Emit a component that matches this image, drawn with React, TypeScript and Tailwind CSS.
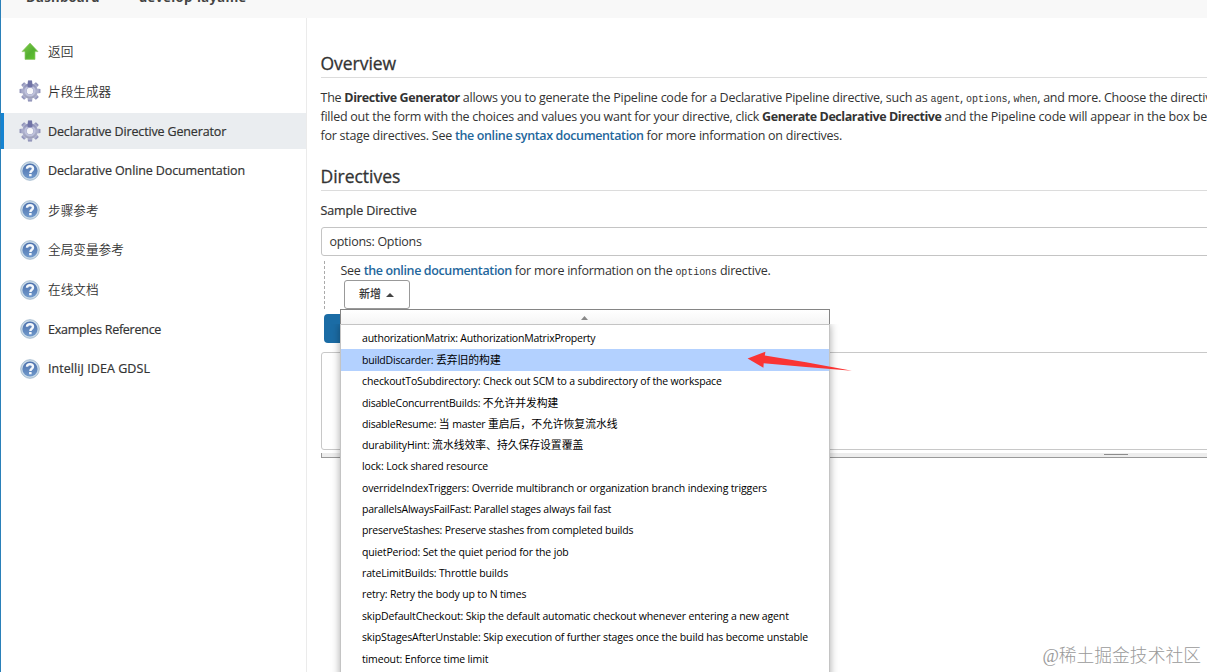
import type { ReactNode } from "react";

const CJK = /([\u3000-\u303f\u4e00-\u9fff\uff00-\uffef]+)/;

function UpArrow() {
  return (
    <svg className="relative -top-px" width="24" height="24" viewBox="0 0 24 24">
      <defs>
        <linearGradient id="up" x1="0" y1="0" x2="1" y2="1">
          <stop offset="0" stopColor="#85cf4b" />
          <stop offset=".55" stopColor="#55b032" />
          <stop offset="1" stopColor="#63c92a" />
        </linearGradient>
      </defs>
      <path d="M12 4 L20 12.6 H17 V20.4 H7 V12.6 H4 Z" fill="url(#up)" stroke="#8fc96a" strokeWidth=".7" strokeLinejoin="round" />
    </svg>
  );
}

function Gear() {
  return (
    <svg width="24" height="24" viewBox="0 0 24 24">
      <defs>
        <linearGradient id="gear" x1="0" y1="0" x2="0" y2="1">
          <stop offset="0" stopColor="#8386b0" />
          <stop offset=".5" stopColor="#b0b3d0" />
          <stop offset="1" stopColor="#9b9eb6" />
        </linearGradient>
      </defs>
      <g fill="url(#gear)">
        {[0, 45, 90, 135, 180, 225, 270, 315].map((a) => (
          <path key={a} d="M9.2 6.5 L10 1.6 H14 L14.8 6.5 Z" transform={`rotate(${a} 12 12)`} />
        ))}
        <path fillRule="evenodd" d="M12 4.4a7.6 7.6 0 1 1 0 15.2a7.6 7.6 0 1 1 0-15.2zM12 8.9a3.1 3.1 0 1 0 0 6.2a3.1 3.1 0 1 0 0-6.2z" />
      </g>
      <circle cx="12" cy="12" r="4.6" fill="none" stroke="#bfc2dc" strokeWidth="2" />
      <circle cx="12" cy="12" r="3" fill="#f7f7fa" />
      <path d="M9.4 8.2 L10.2 1.8 H13.8 L14.6 8.2 Z" fill="#7073a6" />
    </svg>
  );
}

function Help() {
  return (
    <svg width="24" height="24" viewBox="0 0 24 24">
      <defs>
        <linearGradient id="help" x1="0" y1="0" x2="0" y2="1">
          <stop offset="0" stopColor="#4c70ac" />
          <stop offset="1" stopColor="#7099cb" />
        </linearGradient>
      </defs>
      <circle cx="12" cy="12" r="9.3" fill="#c9dae8" stroke="#9fb8cd" strokeWidth=".9" />
      <circle cx="12" cy="12" r="7.6" fill="url(#help)" />
      <path d="M9 9.8c.1-3.5 6-3.4 6 0c0 2-2.6 2-2.6 4.1" fill="none" stroke="#f4f8fc" strokeWidth="2.4" />
      <rect x="11.1" y="15" width="2.5" height="2.3" fill="#f4f8fc" />
    </svg>
  );
}

type Item = { label: string; icon: ReactNode; active?: boolean; cls: string };

const latin = "relative top-px text-[12.5px] [-webkit-text-stroke:0.2px_#333]";
const han = "text-[12.65px] font-[350]";

const nav: Item[] = [
  { label: "返回", icon: <UpArrow />, cls: han },
  { label: "片段生成器", icon: <Gear />, cls: han },
  { label: "Declarative Directive Generator", icon: <Gear />, active: true, cls: `${latin} tracking-[-0.15px]` },
  { label: "Declarative Online Documentation", icon: <Help />, cls: `${latin} tracking-[-0.115px]` },
  { label: "步骤参考", icon: <Help />, cls: han },
  { label: "全局变量参考", icon: <Help />, cls: han },
  { label: "在线文档", icon: <Help />, cls: han },
  { label: "Examples Reference", icon: <Help />, cls: `${latin} tracking-[-0.26px]` },
  { label: "IntelliJ IDEA GDSL", icon: <Help />, cls: `${latin} tracking-[0.06px]` },
];

const options = [
  "authorizationMatrix: AuthorizationMatrixProperty",
  "buildDiscarder: 丢弃旧的构建",
  "checkoutToSubdirectory: Check out SCM to a subdirectory of the workspace",
  "disableConcurrentBuilds: 不允许并发构建",
  "disableResume: 当 master 重启后，不允许恢复流水线",
  "durabilityHint: 流水线效率、持久保存设置覆盖",
  "lock: Lock shared resource",
  "overrideIndexTriggers: Override multibranch or organization branch indexing triggers",
  "parallelsAlwaysFailFast: Parallel stages always fail fast",
  "preserveStashes: Preserve stashes from completed builds",
  "quietPeriod: Set the quiet period for the job",
  "rateLimitBuilds: Throttle builds",
  "retry: Retry the body up to N times",
  "skipDefaultCheckout: Skip the default automatic checkout whenever entering a new agent",
  "skipStagesAfterUnstable: Skip execution of further stages once the build has become unstable",
  "timeout: Enforce time limit",
];

const tight = new Set([0, 1, 3, 4, 8, 9]);

function Mixed({ text }: { text: string }) {
  return (
    <>
      {text.split(CJK).map((part, i) =>
        i % 2 ? (
          <span key={i} className="text-[10.8px] tracking-normal">{part}</span>
        ) : (
          part
        ),
      )}
    </>
  );
}

function Code({ children }: { children: ReactNode }) {
  return <code className="font-['Liberation_Mono',monospace] text-[10px] leading-none tracking-[-0.08px]">{children}</code>;
}

function Strong({ children }: { children: ReactNode }) {
  return <b className="font-bold tracking-[-0.43px]">{children}</b>;
}

function Link({ children }: { children: ReactNode }) {
  return <a className="font-semibold tracking-[-0.37px] text-[#1f679c]">{children}</a>;
}

function Heading({ children }: { children: ReactNode }) {
  return (
    <h2 className="h-[28px] border-b border-[#dcdcdc] text-[17.5px] leading-[27px] tracking-[-0.03px] [-webkit-text-stroke:0.3px_#333]">
      {children}
    </h2>
  );
}

export default function App() {
  return (
    <div className="relative flex h-[672px] w-[1207px] flex-col overflow-hidden border-l border-[#2a80b9] bg-white font-['Open_Sans','Noto_Sans_CJK_SC',sans-serif] text-[#333]">
      <header className="flex h-[18px] shrink-0 items-start bg-[#f8f8f8] pl-[25px] text-[13px] font-bold leading-[18px] text-[#444]">
        <div className="-mt-[12px] flex">
          <span className="w-[113px] tracking-[0.35px]">Dashboard</span>
          <span className="tracking-[0.33px]">develop-layame</span>
        </div>
      </header>

      <div className="flex min-h-0 flex-1">
        <nav className="flex w-[306px] shrink-0 flex-col gap-[3.67px] border-r border-[#ebebeb] pt-[15.6px]">
          {nav.map((n) => (
            <div
              key={n.label}
              className={`-ml-px flex h-9 shrink-0 items-center gap-[6px] border-l-4 pl-[14px] ${n.active ? "border-[#1583d1] bg-[#eaedf0]" : "border-transparent"}`}
            >
              {n.icon}
              <span className={`whitespace-nowrap ${n.cls}`}>{n.label}</span>
            </div>
          ))}
        </nav>

        <main className="min-w-0 flex-1 pl-[13.5px] pt-[32px] text-[12.5px]">
          <Heading>Overview</Heading>
          <div className="mt-[10px] whitespace-nowrap leading-[19px] tracking-[-0.25px]">
            <p className="h-[19px]">
              The <Strong>Directive Generator</Strong> allows you to generate the Pipeline code for a Declarative Pipeline directive, such as <Code>agent</Code>, <Code>options</Code>, <Code>when</Code>, and more. Choose the directive
            </p>
            <p className="h-[19px]">
              filled out the form with the choices and values you want for your directive, click <Strong>Generate Declarative Directive</Strong> <span className="tracking-[-0.2px]">and the Pipeline code will appear in the box below</span>
            </p>
            <p className="h-[19px]">
              for stage directives. See <Link>the online syntax documentation</Link> for more information on directives.
            </p>
          </div>
          <div className="mt-[18px]">
            <Heading>Directives</Heading>
          </div>
          <div className="mt-[10px] leading-[19px] tracking-[-0.1px] [-webkit-text-stroke:0.2px_#333]">Sample Directive</div>
          <div className="mt-[7px] flex h-[29px] w-[1000px] items-center rounded-[3px] border border-[#c4c4c4] pl-[8px] pt-[2px] tracking-[-0.28px]">options: Options</div>

          <div className="ml-[3px] mt-[5px] h-[48px] border-l border-dashed border-[#aaa] pl-[16px]">
            <p className="h-[19px] whitespace-nowrap leading-[19px] tracking-[-0.25px]">
              See <Link>the online documentation</Link> for more information on the <Code>options</Code> directive.
            </p>
            <button className="ml-[3px] flex h-[29px] w-[66px] items-center justify-center gap-[5px] rounded-[3px] border border-[#999] bg-white text-[11px] font-medium text-[#333]">
              新增
              <svg width="8" height="4" viewBox="0 0 8 4"><path d="M0 4 L4 0 L8 4 Z" fill="#444" /></svg>
            </button>
          </div>

          <div className="ml-[3px] mt-[5px] h-[29px] w-[120px] rounded-[4px] bg-[#1b6ca5]" />
          <div className="mt-[9px] h-[98px] w-[1000px] rounded-[3px] border border-[#c8c8c8]" />
          <div className="mt-[3px] flex h-[5px] justify-end border-b border-l border-[#999] bg-[#ededed] pr-[79px]">
            <div className="mt-px h-px w-[24px] bg-[#8c8c8c]" />
          </div>
        </main>
      </div>

      <div className="absolute left-[339px] top-[309px] w-[490px]">
        <div className="flex h-[15px] items-center justify-center border border-b-0 border-[#858585] bg-gradient-to-b from-white to-[#f5f5f5]">
          <svg className="-ml-[2px] mt-[2px]" width="7" height="4" viewBox="0 0 7 4"><path d="M0 4 L3.5 0 L7 4 Z" fill="#888" /></svg>
        </div>
        <ul className="h-[380px] border border-[#c4c4c4] bg-white pt-[3px] text-[10.5px] tracking-[-0.145px] text-black shadow-[0_0_8px_rgba(0,0,0,0.35)] [clip-path:inset(0_-12px_0_-12px)]">
          {options.map((o, i) => (
            <li
              key={o}
              className={`flex h-[21.36px] items-center whitespace-pre pl-[21px] leading-[21px] ${i === 1 ? "bg-[#b3d1ff]" : ""} ${tight.has(i) ? "tracking-[-0.2px]" : ""}`}
            >
              <span><Mixed text={o} /></span>
            </li>
          ))}
        </ul>
      </div>

      <svg className="absolute left-[745px] top-[350px]" width="110" height="24" viewBox="0 0 110 24">
        <path d="M1.6 8.4 L19.4 1.8 L18.8 5.6 L60 12.3 L106 20.7 L60 17 L17.7 13.2 L17.4 17.8 Z" fill="#fa3434" />
      </svg>

      <div className="absolute right-[6px] top-[643px] whitespace-nowrap font-['Liberation_Serif','Noto_Sans_CJK_SC',serif] text-[17.8px] font-light leading-[26px] text-[#9a9a9a]">@稀土掘金技术社区</div>
    </div>
  );
}
